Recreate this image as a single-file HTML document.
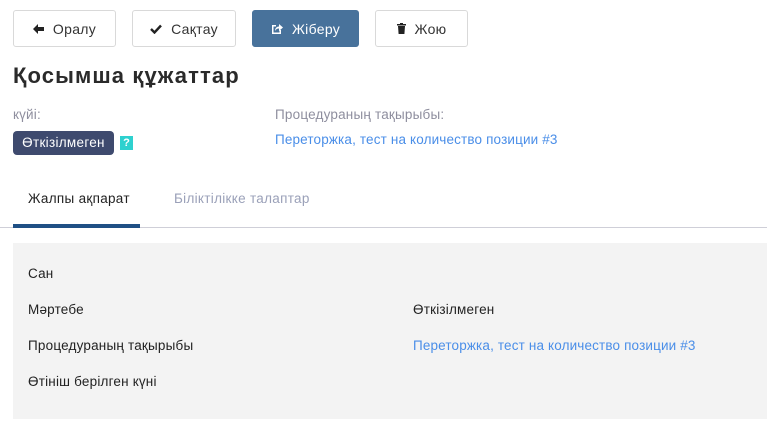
<!DOCTYPE html>
<html><head><meta charset="utf-8"><style>
*{margin:0;padding:0;box-sizing:border-box}
body{width:767px;height:429px;background:#fff;font-family:"Liberation Sans","DejaVu Sans",sans-serif;position:relative;overflow:hidden;color:#222}
.a{position:absolute;white-space:nowrap}
.btn{position:absolute;top:10px;height:37px;border:1px solid #d9d9d9;border-radius:3px;background:#fff;font-size:14px;letter-spacing:0.3px;color:#333;display:flex;align-items:center;justify-content:center;gap:9px}
.btn.p{background:#48729b;border-color:#48729b;color:#fff}
.lbl{font-size:13.5px;letter-spacing:0.2px;color:#8e8e9e}
.link{color:#4a8ee8;font-size:13.5px;letter-spacing:0.15px}
.t{font-size:13.5px;letter-spacing:0.2px;color:#222}
</style></head><body>
<div class="btn" style="left:13px;width:103px"><svg width="11" height="10" viewBox="0 0 11 10"><path d="M0 5L5 0V3H11V7H5V10Z" fill="#222"/></svg>Оралу</div>
<div class="btn" style="left:132px;width:104px"><svg width="12" height="10" viewBox="0 0 12 10"><path d="M1 5L4.5 8.5L11 1.5" stroke="#222" stroke-width="2.4" fill="none"/></svg>Сақтау</div>
<div class="btn p" style="left:252px;width:107px"><svg width="12" height="11" viewBox="0 0 12 11"><path d="M1 2H5V3.5H2.5V9.5H8.5V7H10V11H1Z" fill="#fff"/><path d="M4 8C4 5 6 3.5 8 3.5V1L12 4.5L8 8V5.5C6.5 5.5 5 6 4 8Z" fill="#fff"/></svg>Жіберу</div>
<div class="btn" style="left:375px;width:93px"><svg width="9" height="11" viewBox="0 0 9 11"><rect x="0" y="1" width="9" height="1.5" fill="#222"/><rect x="3" y="0" width="3" height="1.5" fill="#222"/><path d="M1 3H8L7.4 11H1.6Z" fill="#222"/></svg>Жою</div>
<div class="a" style="left:13px;top:63px;font-size:22px;letter-spacing:1.1px;font-weight:bold;color:#2a2a2a">Қосымша құжаттар</div>
<div class="a lbl" style="left:13px;top:107px">күйі:</div>
<div class="a" style="left:13px;top:131px;width:101px;height:24px;background:#3e4a6e;border-radius:4px;color:#fff;font-size:13.5px;letter-spacing:0.3px;text-align:center;line-height:24px">Өткізілмеген</div>
<div class="a" style="left:120px;top:136px;width:13px;height:14px;background:#2ed1cf;color:#fff;font-size:11px;font-weight:bold;text-align:center;line-height:14px">?</div>
<div class="a lbl" style="left:275px;top:107px">Процедураның тақырыбы:</div>
<div class="a link" style="left:275px;top:132px">Переторжка, тест на количество позиции #3</div>
<div class="a" style="left:28px;top:191px;font-size:13.5px;letter-spacing:0.3px;color:#222">Жалпы ақпарат</div>
<div class="a" style="left:174px;top:191px;font-size:13.5px;letter-spacing:0.3px;color:#9aa0b8">Біліктілікке талаптар</div>
<div class="a" style="left:0;top:227px;width:767px;height:1px;background:#cfcfd8"></div>
<div class="a" style="left:13px;top:224px;width:127px;height:4px;background:#1f5085"></div>
<div class="a" style="left:13px;top:243px;width:754px;height:176px;background:#f3f3f3"></div>
<div class="a t" style="left:28px;top:266px">Сан</div>
<div class="a t" style="left:28px;top:302px">Мәртебе</div>
<div class="a t" style="left:413px;top:302px">Өткізілмеген</div>
<div class="a t" style="left:28px;top:338px">Процедураның тақырыбы</div>
<div class="a link" style="left:413px;top:338px">Переторжка, тест на количество позиции #3</div>
<div class="a t" style="left:28px;top:374px">Өтініш берілген күні</div>
</body></html>
